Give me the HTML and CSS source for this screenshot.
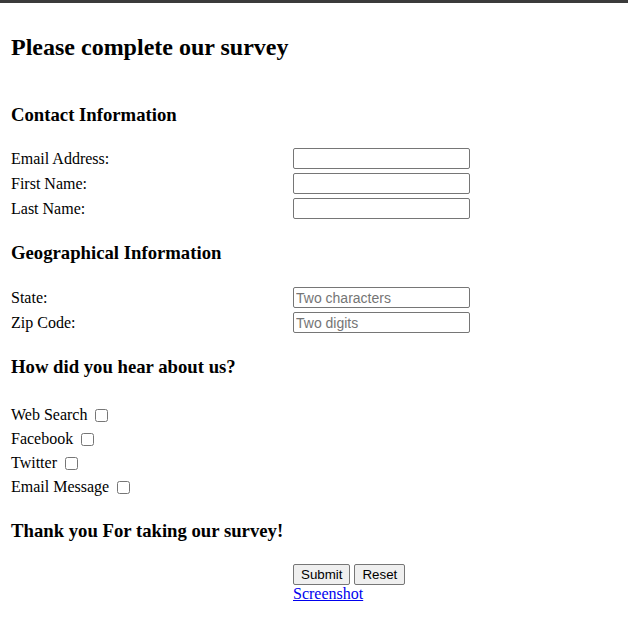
FILE: index.html
```html
<!DOCTYPE html>
<html lang="en">
<head>
<meta charset="utf-8">
<title>Survey</title>
<link rel="stylesheet" href="styles.css">
</head>
<body>
<form class="survey">
  <h1 class="title">Please complete our survey</h1>

  <h3 class="section first">Contact Information</h3>
  <div class="fields">
    <label class="label" for="email">Email Address:</label>
    <input class="field" id="email" type="text">
    <label class="label" for="first">First Name:</label>
    <input class="field" id="first" type="text">
    <label class="label" for="last">Last Name:</label>
    <input class="field" id="last" type="text">
  </div>

  <h3 class="section">Geographical Information</h3>
  <div class="fields geo">
    <label class="label" for="state">State:</label>
    <input class="field" id="state" type="text" placeholder="Two characters">
    <label class="label" for="zip">Zip Code:</label>
    <input class="field" id="zip" type="text" placeholder="Two digits">
  </div>

  <h3 class="section">How did you hear about us?</h3>
  <div class="checks">
    <label class="check">Web Search <input class="box" type="checkbox"></label>
    <label class="check">Facebook <input class="box" type="checkbox"></label>
    <label class="check">Twitter <input class="box" type="checkbox"></label>
    <label class="check">Email Message <input class="box" type="checkbox"></label>
  </div>

  <h3 class="section last">Thank you For taking our survey!</h3>
  <div class="actions">
    <div class="buttons">
      <button class="btn" type="submit">Submit</button>
      <button class="btn" type="reset">Reset</button>
    </div>
    <a class="link" href="#">Screenshot</a>
  </div>
</form>
</body>
</html>
```
FILE: styles.css
```css
html {
  border-top: 3px solid #3b3b3b;
  background: #fff;
}
body {
  margin: 0;
  padding: 0 0 0 11px;
  font-family: "Liberation Serif", "Times New Roman", serif;
  font-size: 16px;
  line-height: 18px;
  color: #000;
}
.survey {
  margin: 0;
}
.title {
  margin: 30px 0 0;
  font-size: 24px;
  line-height: 28px;
  font-weight: bold;
}
.section {
  margin: 23px 0 0;
  font-size: 18.72px;
  line-height: 22px;
  font-weight: bold;
}
.section.first {
  margin-top: 43px;
}
.section.last {
  margin-top: 24px;
}
.fields {
  margin-top: 22px;
  display: grid;
  grid-template-columns: 282px 177px;
  row-gap: 4px;
  align-items: center;
}
.fields.geo {
  margin-top: 23px;
}
.field {
  box-sizing: border-box;
  width: 177px;
  height: 21px;
  margin: 0;
  padding: 1px 2px;
  border: 1px solid #767676;
  border-radius: 2px;
  font-family: "Liberation Sans", Arial, sans-serif;
  font-size: 14px;
  color: #000;
}
.field::placeholder {
  color: #757575;
}
.checks {
  margin-top: 28px;
  display: flex;
  flex-direction: column;
  row-gap: 6px;
}
.check {
  display: block;
  line-height: 18px;
}
.box {
  width: 13px;
  height: 13px;
  margin: 0 0 0 4px;
  vertical-align: -2px;
}
.actions {
  margin-top: 22px;
  padding-left: 282px;
  display: flex;
  flex-direction: column;
  align-items: flex-start;
}
.buttons {
  display: flex;
  gap: 4px;
}
.btn {
  margin: 0;
  height: 21px;
  padding: 1px 7px;
  font-family: "Liberation Sans", Arial, sans-serif;
  font-size: 13.33px;
  color: #000;
  background: #efefef;
  border: 1px solid #767676;
  border-radius: 2px;
}
.link {
  color: #0000ee;
  text-decoration: underline;
  line-height: 18px;
}
```
